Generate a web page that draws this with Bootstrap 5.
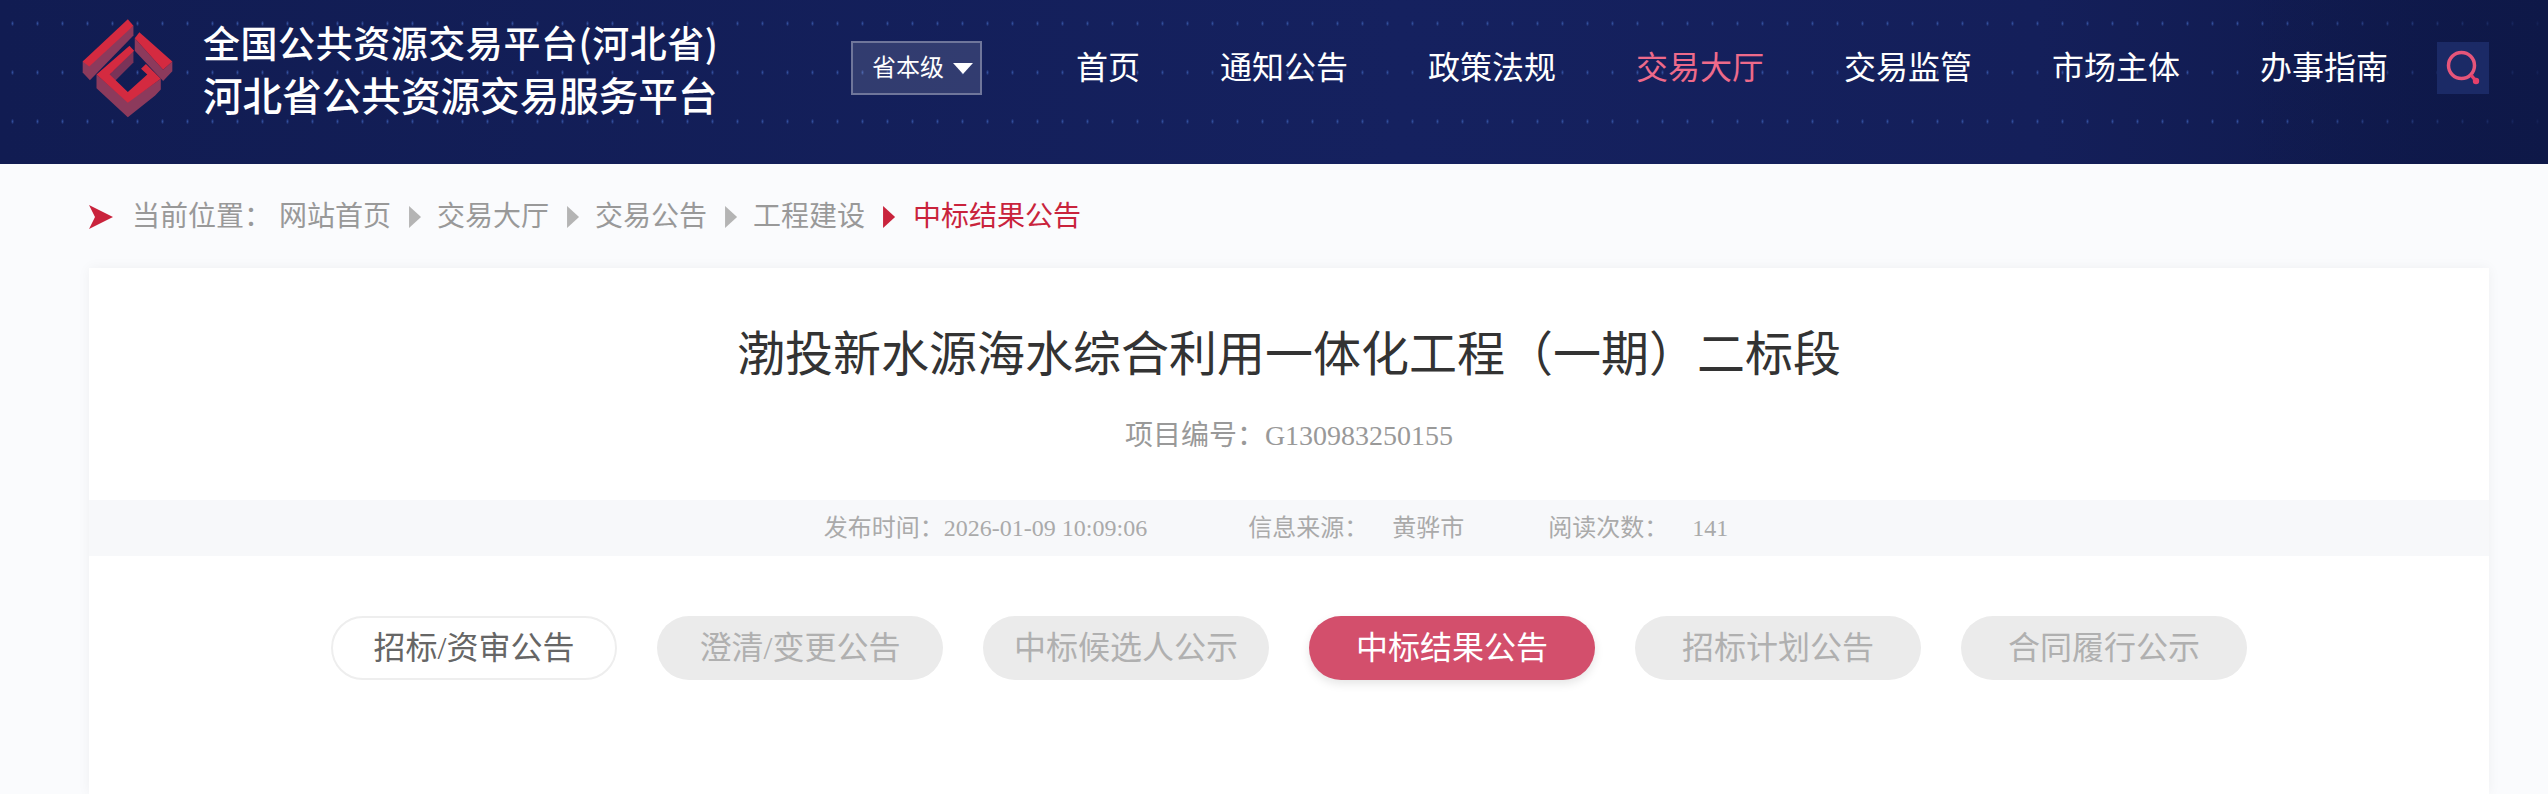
<!DOCTYPE html>
<html lang="zh-CN">
<head>
    <meta charset="UTF-8">
    <meta name="viewport" content="width=device-width, initial-scale=1.0">
    <title>中标结果公告</title>
    <link rel="stylesheet" href="https://cdn.jsdelivr.net/npm/bootstrap@5.3.3/dist/css/bootstrap.min.css">
    <style>
        html, body { height: 100%; overflow: hidden; }
        body { background: #fafbfd; font-family: "Liberation Serif", "Noto Sans CJK SC", serif; }
        .page-wrap { height: 100vh; }

        /* header */
        .site-header {
            height: 164px; flex: none; padding: 17px 59px 0 82px;
            background:
                linear-gradient(90deg, transparent 88%, rgba(14,24,72,.85) 100%),
                radial-gradient(ellipse 1.5px 3px at center, #33509f 0, rgba(51,80,159,.45) 60%, transparent 100%) 0 -1px / 25px 49px,
                linear-gradient(90deg, #111c52 0, #15215f 55%, #141f5a 80%, #0e1848 100%);
        }
        .head-row { height: 102px; }
        .site-logo { width: 91px; height: 99px; flex: none; }
        .site-title { margin-left: 30px; width: 512px; color: #fff; font-family: "Noto Sans CJK SC", sans-serif; font-weight: 500; white-space: nowrap; }
        .site-title div { height: 52px; line-height: 52px; }
        .site-title .line-a { font-size: 37px; letter-spacing: .55px; }
        .site-title .line-b { font-size: 39.6px; }
        .level-btn {
            margin-left: 136px; width: 131px; height: 54px; padding: 0 0 0 19px; border-radius: 0;
            border: 2px solid rgba(255,255,255,.3); background: rgba(255,255,255,.13);
            color: #fff; font-size: 24px; line-height: 1; white-space: nowrap;
        }
        .level-btn:hover { background: rgba(255,255,255,.13); color: #fff; border-color: rgba(255,255,255,.3); }
        .level-tri { margin-left: 9px; width: 0; height: 0; border-left: 10px solid transparent; border-right: 10px solid transparent; border-top: 11px solid #fff; }
        .main-nav { margin-left: 94px; gap: 80px; }
        .main-nav .nav-link { padding: 0; color: #fff; font-size: 32px; line-height: 44px; }
        .main-nav .nav-link.active { color: #ee6a8a; }
        .search-box { margin-left: 49px; width: 52px; height: 52px; background: #1b2a66; }

        /* breadcrumb */
        .crumb-bar { height: 104px; flex: none; padding: 2px 0 0 89px; font-size: 28px; color: #999; }
        .crumb-arrow { width: 24px; height: 24px; flex: none; margin-right: 19px; }
        .crumb-bar .breadcrumb { --bs-breadcrumb-margin-bottom: 0; --bs-breadcrumb-item-padding-x: 0; align-items: center; }
        .crumb-label { margin-right: 7px; }
        .crumb-bar .breadcrumb-item { color: #999; line-height: 40px; display: flex; align-items: center; }
        .crumb-bar .breadcrumb-item a { color: #999; text-decoration: none; }
        .crumb-bar .breadcrumb-item + .breadcrumb-item::before {
            content: ""; float: none; padding: 0; width: 12px; height: 22px; margin: 0 16px 0 18px;
            background: #b4b4b4; clip-path: polygon(0 0, 100% 50%, 0 100%);
        }
        .crumb-bar .breadcrumb-item.active { color: #c9233c; }
        .crumb-bar .breadcrumb-item.active::before { background: #c9233c; margin-right: 18px; margin-left: 18px; }

        /* article card */
        .article-card { margin: 0 59px 0 89px; box-shadow: 0 0 12px rgba(0,0,0,.05); }
        .article-title { margin: 55px 0 0; font-size: 48px; line-height: 64px; font-weight: 400; color: #333; font-family: inherit; }
        .article-code { margin: 29px 0 0; font-size: 28px; line-height: 40px; color: #999; }
        .article-meta { margin-top: 44px; height: 56px; background: #f7f8fa; font-size: 24px; color: #aaa; padding-right: 26px; }
        .meta-gap-a { margin-left: 101px; }
        .meta-gap-b { margin-left: 84px; }
        .meta-val { margin-left: 24px; }
        .type-tabs { margin-top: 60px; gap: 40px; }
        .type-tabs .nav-link {
            width: 286px; height: 64px; padding: 0; border-radius: 32px; text-align: center;
            font-size: 32px; line-height: 64px; background: #ebebeb; color: #b0b0b0;
        }
        .type-tabs .nav-link.tab-first { background: #fff; color: #666; border: 2px solid #eee; line-height: 60px; }
        .type-tabs .nav-link.active { background: #d34f6c; color: #fff; box-shadow: 0 4px 10px rgba(0,0,0,.1); }
    </style>
</head>
<body>
<div class="page-wrap d-flex flex-column">

    <header class="site-header">
        <div class="head-row d-flex align-items-center">
            <svg class="site-logo" viewBox="66 54 276 300" aria-hidden="true">
                <!-- side walls -->
                <path fill="#8c3a5c" d="M222 74V104L90 240 68 216V183Z"/>
                <path fill="#8c3a5c" d="M226 112V150L312 242 340 212V183L312 208Z"/>
                <path fill="#8c3a5c" d="M110 222V264L205 352 288 286 305 268V235L205 305Z"/>
                <path fill="#7a3358" d="M222 150V186L150 258V222Z"/>
                <!-- top faces -->
                <path fill="#d42a40" d="M205 55 222 74 88 198 68 183Z"/>
                <path fill="#d42a40" d="M240 94 340 183 312 208 226 112Z"/>
                <path fill="#d42a40" d="M210 135 224 150 150 222 205 275 264 222 245 205 260 190 305 235 205 308 110 222Z"/>
            </svg>
            <div class="site-title">
                <div class="line-a">全国公共资源交易平台(河北省)</div>
                <div class="line-b">河北省公共资源交易服务平台</div>
            </div>
            <button type="button" class="btn level-btn d-flex align-items-center">
                省本级<span class="level-tri"></span>
            </button>
            <nav class="nav main-nav flex-nowrap">
                <a class="nav-link" href="#">首页</a>
                <a class="nav-link" href="#">通知公告</a>
                <a class="nav-link" href="#">政策法规</a>
                <a class="nav-link active" href="#">交易大厅</a>
                <a class="nav-link" href="#">交易监管</a>
                <a class="nav-link" href="#">市场主体</a>
                <a class="nav-link" href="#">办事指南</a>
            </nav>
            <div class="search-box d-flex align-items-center justify-content-center">
                <svg width="52" height="52" viewBox="0 0 52 52" aria-hidden="true">
                    <circle cx="24.5" cy="23.5" r="13" fill="none" stroke="#e5557a" stroke-width="3.5"/>
                    <path d="M34 33 39 39" fill="none" stroke="#e5406a" stroke-width="3.5"/>
                    <circle cx="39" cy="39" r="3.2" fill="#e5406a"/>
                </svg>
            </div>
        </div>
    </header>

    <div class="crumb-bar d-flex align-items-center">
        <svg class="crumb-arrow" viewBox="0 0 24 24" aria-hidden="true"><path fill="#c9233c" d="M0 0 24 12 0 24 6 12Z"/></svg>
        <span class="crumb-label">当前位置&#xFF1A;</span>
        <ol class="breadcrumb">
            <li class="breadcrumb-item"><a href="#">网站首页</a></li>
            <li class="breadcrumb-item"><a href="#">交易大厅</a></li>
            <li class="breadcrumb-item"><a href="#">交易公告</a></li>
            <li class="breadcrumb-item"><a href="#">工程建设</a></li>
            <li class="breadcrumb-item active">中标结果公告</li>
        </ol>
    </div>

    <main class="card article-card flex-grow-1 border-0 rounded-0">
        <h1 class="article-title text-center">渤投新水源海水综合利用一体化工程&#xFF08;一期&#xFF09;二标段</h1>
        <p class="article-code text-center">项目编号&#xFF1A;G130983250155</p>
        <div class="article-meta d-flex align-items-center justify-content-center">
            <span>发布时间&#xFF1A;2026-01-09 10:09:06</span>
            <span class="meta-gap-a">信息来源&#xFF1A;</span><span class="meta-val">黄骅市</span>
            <span class="meta-gap-b">阅读次数&#xFF1A;</span><span class="meta-val">141</span>
        </div>
        <nav class="nav type-tabs justify-content-center flex-nowrap">
            <a class="nav-link tab-first" href="#">招标/资审公告</a>
            <a class="nav-link" href="#">澄清/变更公告</a>
            <a class="nav-link" href="#">中标候选人公示</a>
            <a class="nav-link active" href="#">中标结果公告</a>
            <a class="nav-link" href="#">招标计划公告</a>
            <a class="nav-link" href="#">合同履行公示</a>
        </nav>
    </main>
</div>
<script src="https://cdn.jsdelivr.net/npm/bootstrap@5.3.3/dist/js/bootstrap.bundle.min.js"></script>
</body>
</html>
